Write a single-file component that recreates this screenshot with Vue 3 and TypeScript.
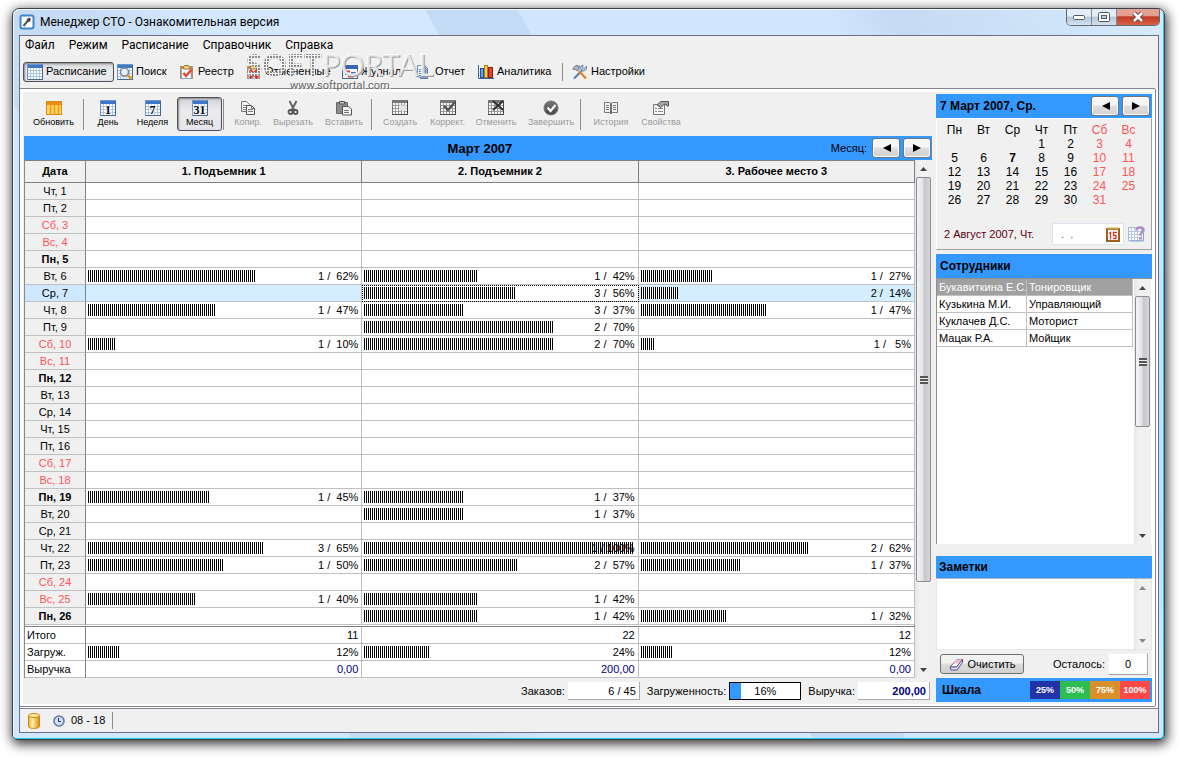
<script setup lang="ts">
interface Cell { count: number; load: number }
interface DayRow { label: string; kind: '' | 'weekend' | 'monday'; cells: (Cell | null)[] }

const menu: string[] = ['Файл', 'Режим', 'Расписание', 'Справочник', 'Справка']

const modes = [
  { label: 'Расписание', icon: 'grid', on: true },
  { label: 'Поиск', icon: 'find' },
  { label: 'Реестр', icon: 'clip' },
  { label: 'Отмененные', icon: 'clipx' },
  { label: 'Журнал', icon: 'journal' },
  { label: 'Отчет', icon: 'report' },
  { label: 'Аналитика', icon: 'chart' },
  { label: '', icon: '' },
  { label: 'Настройки', icon: 'tools' },
]

const actions = [
  { label: 'Обновить', icon: 'refresh' },
  { label: '', icon: '' },
  { label: 'День', icon: 'day', num: '1' },
  { label: 'Неделя', icon: 'day', num: '7' },
  { label: 'Месяц', icon: 'day', num: '31', on: true },
  { label: '', icon: '' },
  { label: 'Копир.', icon: 'copy', off: true },
  { label: 'Вырезать', icon: 'cut', off: true },
  { label: 'Вставить', icon: 'paste', off: true },
  { label: '', icon: '' },
  { label: 'Создать', icon: 'gnew', off: true },
  { label: 'Коррект.', icon: 'gedit', off: true },
  { label: 'Отменить', icon: 'gdel', off: true },
  { label: 'Завершить', icon: 'done', off: true },
  { label: '', icon: '' },
  { label: 'История', icon: 'book', off: true },
  { label: 'Свойства', icon: 'props', off: true },
]

const places: string[] = ['1. Подъемник 1', '2. Подъемник 2', '3. Рабочее место 3']
const weekdays: string[] = ['Пн', 'Вт', 'Ср', 'Чт', 'Пт', 'Сб', 'Вс']

const orders: Record<number, (([number, number]) | null)[]> = {
  6: [[1, 62], [1, 42], [1, 27]],
  7: [null, [3, 56], [2, 14]],
  8: [[1, 47], [3, 37], [1, 47]],
  9: [null, [2, 70], null],
  10: [[1, 10], [2, 70], [1, 5]],
  19: [[1, 45], [1, 37], null],
  20: [null, [1, 37], null],
  22: [[3, 65], [1, 100], [2, 62]],
  23: [[1, 50], [2, 57], [1, 37]],
  25: [[1, 40], [1, 42], null],
  26: [null, [1, 42], [1, 32]],
}

const days: DayRow[] = Array.from({ length: 26 }, (_, i) => {
  const day = i + 1
  const wd = (i + 3) % 7
  const found = orders[day] ?? [null, null, null]
  return {
    label: `${weekdays[wd]}, ${day}`,
    kind: wd > 4 ? 'weekend' : wd === 0 ? 'monday' : '',
    cells: found.map((c) => (c ? { count: c[0], load: c[1] } : null)),
  }
})

const cellText = (c: Cell): string => `${c.count} / ${`${c.load}%`.padStart(4, ' ')}`

const weeks: (number | null)[][] = [
  [null, null, null, 1, 2, 3, 4],
  [5, 6, 7, 8, 9, 10, 11],
  [12, 13, 14, 15, 16, 17, 18],
  [19, 20, 21, 22, 23, 24, 25],
  [26, 27, 28, 29, 30, 31, null],
]

const staff: [string, string][] = [
  ['Букавиткина Е.С.', 'Тонировщик'],
  ['Кузькина М.И.', 'Управляющий'],
  ['Куклачев Д.С.', 'Моторист'],
  ['Мацак Р.А.', 'Мойщик'],
]

const loads: number[] = [12, 24, 12]
</script>

<template>
  <div class="desktop">
    <svg class="defs" aria-hidden="true">
      <linearGradient id="gold" x1="0" x2="1"><stop offset="0" stop-color="#f0a818" /><stop offset=".35" stop-color="#fff2b0" /><stop offset="1" stop-color="#dc8c08" /></linearGradient>
      <linearGradient id="ball" x1="0" y1="0" x2="0" y2="1"><stop offset="0" stop-color="#777" /><stop offset="1" stop-color="#444" /></linearGradient>
      <symbol id="i-grid" viewBox="0 0 16 16">
        <rect x=".5" y=".5" width="15" height="15" fill="#fff" stroke="#6f93c8" />
        <rect x="1" y="1" width="14" height="3" fill="#3c78c8" />
        <path d="M1 6.500h14M1 9.500h14M1 12.500h14M3.500 4v11M6.500 4v11M9.500 4v11M12.500 4v11" stroke="#a9c4e8" />
        <path d="M15.500 1v14.500H1" fill="none" stroke="#45658f" />
      </symbol>
      <symbol id="i-find" viewBox="0 0 16 16">
        <use href="#i-grid" />
        <circle cx="7.500" cy="8" r="4" fill="#e4f1fb" stroke="#7d8794" stroke-width="1.500" />
        <path d="M10.500 11l4 4" stroke="#d99a2b" stroke-width="2.500" />
      </symbol>
      <symbol id="i-clip" viewBox="0 0 16 16">
        <path d="M1.500 2.500h12v12h-12z" fill="#c9853a" stroke="#b98a5a" />
        <path d="M2.500 4.500h9l1 10h-10z" fill="#f4f7fc" stroke="#8fa6c8" />
        <path d="M4.500 3.500l1-2h4l1 2v1.500h-6z" fill="#f0d48a" stroke="#9f7a25" />
        <path d="M4.500 9l2.500 3 5.500-6.500" fill="none" stroke="#e04a32" stroke-width="2.400" />
      </symbol>
      <symbol id="i-clipx" viewBox="0 0 16 16">
        <path d="M1.500 2.500h12v12h-12z" fill="#c9853a" stroke="#b98a5a" />
        <path d="M2.500 4.500h10v10h-10z" fill="#f4f7fc" stroke="#8fa6c8" />
        <path d="M4.500 3.500l1-2h4l1 2v1.500h-6z" fill="#f0d48a" stroke="#9f7a25" />
        <path d="M4 6l7.500 8M11.500 6L4 14" stroke="#d92a1c" stroke-width="2.800" />
      </symbol>
      <symbol id="i-journal" viewBox="0 0 16 16">
        <rect x=".5" y="1.500" width="15" height="13" fill="#f3f7fd" stroke="#4a6694" />
        <path d="M1 3.500h14" stroke="#3465b5" stroke-width="3" />
        <path d="M3 7.500h5M6 12.500h6" stroke="#e03c2c" stroke-width="2" />
        <path d="M3 10h4M9 9h5" stroke="#4073c4" stroke-width="2" />
      </symbol>
      <symbol id="i-report" viewBox="0 0 16 16">
        <path d="M4.500 1.500h4l3 3v10h-7z" fill="#9fb6d4" stroke="#56739c" />
        <path d="M1.500 1.500h5l3 3v8.500h-8z" fill="#eef5fd" stroke="#6d8cb5" />
        <path d="M3 5.500h4M3 7.500h5M3 9.500h5M3 11.500h5" stroke="#4f7fc0" />
      </symbol>
      <symbol id="i-chart" viewBox="0 0 16 16">
        <path d="M.5 1v13.500H16" fill="none" stroke="#3b5f9c" />
        <rect x="2.500" y="4.500" width="3" height="9" fill="#6ea2e8" stroke="#234f96" />
        <rect x="6.500" y="1.500" width="3" height="12" fill="#fbd24b" stroke="#b27c12" />
        <rect x="10.500" y="3.500" width="4" height="10" fill="#e2442f" stroke="#8d1f12" />
      </symbol>
      <symbol id="i-tools" viewBox="0 0 16 16">
        <path d="M2 14.500L11 5.500" stroke="#5d7fae" stroke-width="2.200" />
        <path d="M14.500 2l-2 2.500-2-1 .5-2.500c-3 .5-3 3.500-1.500 5s4.500 1 5-1.500z" fill="#b5c9e4" stroke="#54729f" stroke-width=".8" />
        <path d="M7 7l7 7.500" stroke="#d98b26" stroke-width="2.400" />
        <path d="M.8 4.500L4 1.200l4 1.300-1.500.8.8 2L5.200 7 3.500 5l-1.500 1z" fill="#aab4c2" stroke="#5b6675" stroke-width=".8" />
      </symbol>
      <symbol id="i-refresh" viewBox="0 0 16 16">
        <rect x=".5" y="1.500" width="15" height="13" fill="#ffd35c" stroke="#d78a14" />
        <rect x="1" y="2" width="14" height="3" fill="#ee8d10" />
        <path d="M4.500 5v9M8.500 5v9M12.500 5v9" stroke="#ee9c20" stroke-width="1.500" />
      </symbol>
      <symbol id="i-copy" viewBox="0 0 16 16">
        <path d="M1.500 1.500h5l3 3v7h-8z" fill="#f4f4f4" stroke="#777" />
        <path d="M3 5.500h4M3 7.500h4M3 9.500h4" stroke="#888" />
        <path d="M6.500 5.500h5l3 3v6h-8z" fill="#f4f4f4" stroke="#555" />
        <path d="M8 9.500h5M8 11.500h5M11.500 5.500v3h3" fill="none" stroke="#777" />
      </symbol>
      <symbol id="i-cut" viewBox="0 0 16 16">
        <path d="M4.500 1l5 9.500M11.500 1l-5 9.500" stroke="#666" stroke-width="2" />
        <circle cx="5.500" cy="12" r="2" fill="none" stroke="#555" stroke-width="1.800" />
        <circle cx="10.500" cy="12" r="2" fill="none" stroke="#555" stroke-width="1.800" />
      </symbol>
      <symbol id="i-paste" viewBox="0 0 16 16">
        <path d="M.5 2.500h11v11H.5z" fill="#8c8c8c" stroke="#666" />
        <path d="M3.500 1.500h5v2.500h-5z" fill="#ccc" stroke="#555" />
        <path d="M6.500 6.500h6l3 2.500v6h-9z" fill="#f6f6f6" stroke="#555" />
        <path d="M8 10.500h5M8 12.500h5" stroke="#777" />
      </symbol>
      <symbol id="i-ggrid" viewBox="0 0 16 16">
        <rect x=".5" y=".5" width="15" height="14" fill="#fafafa" stroke="#777" />
        <rect x="1" y="1" width="14" height="2" fill="#777" />
        <path d="M1 5.500h14M1 8.500h14M1 11.500h14M3.500 3v12M6.500 3v12M9.500 3v12M12.500 3v12" stroke="#999" />
        <path d="M15.500 1v13.500H0" fill="none" stroke="#444" />
      </symbol>
      <symbol id="i-gnew" viewBox="0 0 16 16">
        <use href="#i-ggrid" />
        <path d="M11 4v8M7 8h8M8 5l6 6M14 5l-6 6" stroke="#e4e4e4" stroke-width="1.500" />
      </symbol>
      <symbol id="i-gedit" viewBox="0 0 16 16">
        <use href="#i-ggrid" />
        <path d="M4 6l4 4 7-8" fill="none" stroke="#555" stroke-width="2.500" />
      </symbol>
      <symbol id="i-gdel" viewBox="0 0 16 16">
        <use href="#i-ggrid" />
        <path d="M5 1l10 9M15 1L5 10" stroke="#333" stroke-width="2" />
      </symbol>
      <symbol id="i-done" viewBox="0 0 16 16">
        <circle cx="8" cy="8" r="7" fill="url(#ball)" stroke="#777" />
        <path d="M4.500 7.500L7.500 11l5-6" fill="none" stroke="#fff" stroke-width="2.200" />
      </symbol>
      <symbol id="i-book" viewBox="0 0 16 16">
        <path d="M1.500 2.500h5l1.500 1 1.500-1h5v10h-5l-1.500 1-1.500-1h-5z" fill="#f2f2f2" stroke="#777" />
        <path d="M8 3.500v10" stroke="#444" stroke-width="1.500" />
        <path d="M3 5.500h3M3 7.500h3M3 9.500h3M10 5.500h3M10 7.500h3M10 9.500h3" stroke="#777" />
      </symbol>
      <symbol id="i-props" viewBox="0 0 16 16">
        <path d="M.5 4.500h11v10H.5z" fill="#f6f6f6" stroke="#777" />
        <path d="M2 8.500h2M5 8.500h5M2 11.500h2M5 11.500h5" stroke="#888" />
        <path d="M4 5l4-3.500h7.500V6H14l-1-2-2 .5L8 7.500z" fill="#a5a5a5" stroke="#555" />
      </symbol>
      <symbol id="i-left" viewBox="0 0 9 8"><path d="M9 0v8L1 4z" fill="currentColor" /></symbol>
      <symbol id="i-right" viewBox="0 0 9 8"><path d="M0 0v8l8-4z" fill="currentColor" /></symbol>
      <symbol id="i-up" viewBox="0 0 8 4"><path d="M0 4h7L3.500 0z" fill="currentColor" /></symbol>
      <symbol id="i-down" viewBox="0 0 8 4"><path d="M0 0h7L3.500 4z" fill="currentColor" /></symbol>
    </svg>

    <div class="window">
      <header class="title">
        <svg class="logo" width="16" height="16" viewBox="0 0 16 16">
          <rect x="1.500" y="1.500" width="13" height="13" rx="2" fill="#fff" stroke="#3f86cc" stroke-width="2" />
          <path d="M4.500 12L9 6.500" stroke="#555" stroke-width="2" />
          <path d="M7.500 5.500L10 3.500l2 1.500-1.500 3-2-.5z" fill="#444" />
        </svg>
        <h1>Менеджер СТО - Ознакомительная версия</h1>
        <div class="sys">
          <button type="button" aria-label="Свернуть"><svg width="14" height="8" viewBox="0 0 14 8"><rect x="1.500" y="2.500" width="11" height="4" rx="1" fill="#fff" stroke="#555b66" /></svg></button>
          <button type="button" aria-label="Развернуть"><svg width="14" height="12" viewBox="0 0 14 12"><rect x="1.500" y="1.500" width="11" height="9" rx="1" fill="#fff" stroke="#555b66" /><rect x="4.500" y="4.500" width="5" height="3" fill="#b8cce2" stroke="#555b66" /></svg></button>
          <button type="button" class="close" aria-label="Закрыть"><svg width="14" height="12" viewBox="0 0 14 12"><path d="M3 2l8 8M11 2l-8 8" stroke="#5a3a3a" stroke-width="4.500" /><path d="M3 2l8 8M11 2l-8 8" stroke="#fff" stroke-width="2.600" /></svg></button>
        </div>
      </header>

      <div class="client">
        <nav class="menu"><a v-for="m in menu" :key="m" href="#">{{ m }}</a></nav>

        <div class="modes">
          <template v-for="(m, i) in modes" :key="i">
            <button v-if="m.label" type="button" :class="{ on: m.on }">
              <svg width="16" height="16"><use :href="'#i-' + m.icon" /></svg>{{ m.label }}
            </button>
            <i v-else class="sep"></i>
          </template>
          <div class="mark"><span class="logo-text"><span class="dots">SOFT</span>PORTAL</span><span class="site">www.softportal.com</span></div>
        </div>

        <div class="panel">
          <main class="left">
            <div class="actions">
              <template v-for="(a, i) in actions" :key="i">
                <button v-if="a.label" type="button" :class="{ on: a.on }" :disabled="a.off">
                  <span v-if="a.num" class="num"><svg width="16" height="16"><use href="#i-grid" /></svg><b>{{ a.num }}</b></span>
                  <svg v-else width="16" height="16"><use :href="'#i-' + a.icon" /></svg>
                  {{ a.label }}
                </button>
                <i v-else class="sep"></i>
              </template>
            </div>

            <div class="bar month">
              <h2>Март 2007</h2>
              <span class="cap">Месяц:</span>
              <button type="button" class="arrow" aria-label="Предыдущий месяц"><svg width="9" height="8"><use href="#i-left" /></svg></button>
              <button type="button" class="arrow" aria-label="Следующий месяц"><svg width="9" height="8"><use href="#i-right" /></svg></button>
            </div>

            <div class="sheet">
              <table class="plan">
                <colgroup><col class="c-date" /><col /><col /><col /></colgroup>
                <thead>
                  <tr><th>Дата</th><th v-for="p in places" :key="p">{{ p }}</th></tr>
                </thead>
                <tbody>
                  <tr v-for="(d, r) in days" :key="d.label" :class="{ today: r === 6 }">
                    <th :class="d.kind">{{ d.label }}</th>
                    <td v-for="(c, k) in d.cells" :key="k" :class="{ focus: r === 6 && k === 1 }">
                      <div v-if="c" class="load"><span class="track"><i class="fill" :style="{ width: c.load + '%' }"></i></span><span class="val">{{ cellText(c) }}</span></div>
                    </td>
                  </tr>
                </tbody>
                <tfoot>
                  <tr class="rule"><td colspan="4"></td></tr>
                  <tr><th>Итого</th><td>11</td><td>22</td><td>12</td></tr>
                  <tr>
                    <th>Загруж.</th>
                    <td v-for="(l, k) in loads" :key="k"><div class="load"><span class="track"><i class="fill" :style="{ width: l + '%' }"></i></span><span class="val">{{ l }}%</span></div></td>
                  </tr>
                  <tr class="money"><th>Выручка</th><td>0,00</td><td>200,00</td><td>0,00</td></tr>
                </tfoot>
              </table>
              <div class="scroll">
                <svg class="tip" width="8" height="4"><use href="#i-up" /></svg>
                <div class="thumb big"><i></i></div>
                <div class="rest"></div>
                <svg class="tip" width="8" height="4"><use href="#i-down" /></svg>
              </div>
            </div>

            <div class="sums">
              <label for="s1">Заказов:</label><input id="s1" value="6 / 45" readonly />
              <label for="s2">Загруженность:</label>
              <div id="s2" class="gauge"><i></i><span>16%</span></div>
              <label for="s3">Выручка:</label><input id="s3" class="total" value="200,00" readonly />
            </div>
          </main>

          <aside class="side">
            <div class="bar">
              <h2>7 Март 2007, Ср.</h2>
              <button type="button" class="arrow" aria-label="Назад"><svg width="9" height="8"><use href="#i-left" /></svg></button>
              <button type="button" class="arrow" aria-label="Вперед"><svg width="9" height="8"><use href="#i-right" /></svg></button>
            </div>
            <section class="calbox">
              <table class="cal">
                <thead><tr><th v-for="w in weekdays" :key="w">{{ w }}</th></tr></thead>
                <tbody>
                  <tr v-for="(w, i) in weeks" :key="i"><td v-for="(d, k) in w" :key="k" :class="{ cur: d === 7 }">{{ d }}</td></tr>
                </tbody>
              </table>
              <div class="date">
                <label for="dt">2 Август 2007, Чт.</label>
                <div class="field">
                  <input id="dt" value=".  ." />
                  <button type="button" aria-label="Календарь">
                    <svg width="14" height="15" viewBox="0 0 14 15"><rect x="1" y="2" width="12" height="12" fill="#fff" stroke="#9a5f22" stroke-width="2" /><path d="M1 1.500h12" stroke="#c8a04a" stroke-width="2" /><path d="M3 6.500l1.500-1v7M11 5.500H7.500v3h2.500v3H7" fill="none" stroke="#e23a2a" stroke-width="1.300" /></svg>
                  </button>
                </div>
                <button type="button" class="ask" aria-label="Найти дату">
                  <svg width="17" height="16" viewBox="0 0 17 16"><rect x=".5" y="1.500" width="13" height="13" fill="#fff" stroke="#a9bbd6" /><path d="M1 5.500h12M1 8.500h12M1 11.500h12M3.500 2v12M6.500 2v12M9.500 2v12" stroke="#b7c8e0" /><path d="M15.500 7v8H2" fill="none" stroke="#8fa3c2" /><path d="M8.500 4.500c0-4 7-4 7 0 0 2.500-3.500 2-3.500 5" fill="none" stroke="#b28ccc" stroke-width="2.500" /><path d="M11 11h2.500v2.500H11z" fill="#b28ccc" /></svg>
                </button>
              </div>
            </section>

            <div class="bar"><h2>Сотрудники</h2></div>
            <div class="list">
              <table class="staff">
                <colgroup><col class="c-name" /><col /></colgroup>
                <tbody><tr v-for="(s, i) in staff" :key="i" :class="{ sel: i === 0 }"><td>{{ s[0] }}</td><td>{{ s[1] }}</td></tr></tbody>
              </table>
              <div class="scroll">
                <svg class="tip" width="8" height="4"><use href="#i-up" /></svg>
                <div class="thumb mid"><i></i></div>
                <div class="rest mid"></div>
                <svg class="tip" width="8" height="4"><use href="#i-down" /></svg>
              </div>
            </div>

            <div class="bar notes-bar"><h2><label for="notes">Заметки</label></h2></div>
            <div class="notes">
              <textarea id="notes"></textarea>
              <div class="scroll faded">
                <svg class="tip" width="8" height="4"><use href="#i-up" /></svg>
                <div class="rest"></div>
                <svg class="tip" width="8" height="4"><use href="#i-down" /></svg>
              </div>
            </div>
            <div class="clear">
              <button type="button">
                <svg width="15" height="13" viewBox="0 0 15 13"><path d="M1 9l7-7.500h5.500L7.500 9z" fill="#fff" stroke="#8a5a78" /><path d="M4.500 5.500L8 1.500h5.500L10.500 5.500z" fill="#f3bfd4" /><path d="M1 9h6.500l6-7.500v3L8 12H2z" fill="#dfe3f4" stroke="#54508a" /></svg>Очистить
              </button>
              <label for="rest">Осталось:</label>
              <input id="rest" value="0" readonly />
            </div>
            <div class="bar scale">
              <h2>Шкала</h2>
              <div class="steps"><span class="s25">25%</span><span class="s50">50%</span><span class="s75">75%</span><span class="s100">100%</span></div>
            </div>
          </aside>
        </div>

        <footer class="status">
          <svg width="12" height="16" viewBox="0 0 12 16"><path d="M.5 2.500v11c0 2.500 11 2.500 11 0v-11z" fill="url(#gold)" stroke="#c98a1c" /><ellipse cx="6" cy="2.500" rx="5.500" ry="2" fill="#ffe9a0" stroke="#c98a1c" /></svg>
          <svg width="12" height="12" viewBox="0 0 12 12"><circle cx="6" cy="6" r="5" fill="#cfe0f8" stroke="#5b76a6" stroke-width="1.500" /><path d="M5.500 3v3.500H8" fill="none" stroke="#234" /></svg>
          <span>08 - 18</span>
        </footer>
      </div>
    </div>
  </div>
</template>

<style>
body { background: #fff; }
</style>

<style scoped>
* { box-sizing: border-box; }
.desktop {
  min-height: 100vh; padding: 8px 13px 18px 12px; display: flex; flex-direction: column;
  font: 11px/17px "Liberation Sans", Arial, sans-serif; color: #000; overflow: hidden;
}
.defs { position: absolute; width: 0; height: 0; }
button, input, textarea { font: inherit; color: inherit; margin: 0; padding: 0; }
svg { flex: none; }
h1, h2 { margin: 0; font-weight: normal; }
table { border-spacing: 0; table-layout: fixed; }
td, th { padding: 0; font-weight: normal; }

.window {
  flex: 1; display: flex; flex-direction: column; padding: 0 5px 6px 6px;
  border: 1px solid #3b444e; border-radius: 7px 7px 5px 5px;
  background: linear-gradient(62deg, #cfe6ff 0 22%, #c6dcf4 22% 30%, #d3e8ff 36% 52%, #c3dbf5 52% 58%, #d0e6ff 58% 78%, #c4dbf3 82%, #d8eafd);
  box-shadow: inset 1px 1px 0 #f2faff, inset -1px -1px 0 #24c8f4, 1px 3px 12px 1px rgba(0, 0, 0, .8);
}
.title { display: flex; align-items: flex-start; height: 26px; }
.logo { margin: 5px 5px 0 0; }
.title h1 { flex: 1; font: 12px/26px Roboto, "Open Sans", sans-serif; }
.sys { display: flex; margin-right: -1px; border: 1px solid #5f6c7a; border-top: 0; border-radius: 0 0 5px 5px; overflow: hidden; }
.sys button {
  width: 25px; height: 16px; border: 0; border-right: 1px solid #7d8a98; display: grid; place-items: center;
  background: linear-gradient(#e4edf6 0 45%, #b3c5d8 50%, #d3e2f0);
}
.sys .close { width: 42px; border-right: 0; background: linear-gradient(#e3a093 0 40%, #c03a22 50%, #d86248); }

.client { flex: 1; display: flex; flex-direction: column; border: 1px solid #6a7080; background: #fff; }
.menu { display: flex; gap: 14px; height: 19px; padding-left: 5px; background: #f0f0f0; font: 12px/18px Roboto, "Open Sans", sans-serif; }
.menu a { color: #000; text-decoration: none; }

.modes {
  position: relative; display: grid; grid-template-columns: 92px 62px 67px 96px 74px 62px 86px 8px 90px;
  align-items: center; height: 33px; padding-left: 3px; background: #f0f0f0;
}
.modes button { display: flex; align-items: center; gap: 3px; height: 20px; padding: 0 2px; border: 0; background: none; white-space: nowrap; }
.modes .on, .actions .on { border: 1px solid #50505a; border-radius: 3px; background: linear-gradient(#d4d4d8, #ececee 40%, #e6e6ea); box-shadow: inset 1px 1px 2px #888; }
.modes .on { margin-right: 1px; padding-left: 3px; }
.sep { width: 1px; height: 18px; background: #8c8c8c; }
.mark { position: absolute; left: 226px; top: -9px; pointer-events: none; font-family: Lato, "Open Sans", sans-serif; }
.logo-text { display: block; font-size: 30px; line-height: 36px; color: rgba(255, 255, 255, .75); text-shadow: 1px 1px 0 #9a9a9a; }
.dots {
  color: transparent; text-shadow: none; background-clip: text; font-weight: 900;
  background-image: repeating-linear-gradient(#f4f4f4 0 1px, transparent 1px 3px), repeating-linear-gradient(90deg, #8a8a8a 0 2px, #f4f4f4 2px 3px);
}
.site { display: block; margin: -3px 0 0 44px; font: 11px/13px Roboto, "Open Sans", sans-serif; color: #666; text-shadow: 1px 1px 0 #fff; }

.panel {
  flex: 1; display: flex; gap: 4px; margin-right: 3px; padding: 0; background: #f0f0f0;
  border: solid #fff; border-width: 3px 3px 2px 3px; box-shadow: 0 -1px 0 #85858f, 1px 0 0 #85858f, 0 1px 0 #85858f;
  margin-top: 1px;
}
.left { flex: 1; min-width: 0; padding-left: 1px; display: flex; flex-direction: column; }
.actions {
  display: grid; height: 44px; align-items: center; justify-content: start; font-size: 9px; line-height: 11px;
  grid-template-columns: 59px 4px 42px 47px 47px 4px 42px 48px 54px 4px 50px 45px 52px 58px 4px 54px 46px;
}
.actions button { display: flex; flex-direction: column; align-items: center; justify-content: flex-end; gap: 1px; height: 34px; padding: 0 0 3px; border: 0; background: none; white-space: nowrap; }
.actions .on { margin: 0 1px; border: 1px solid #50505a; padding-bottom: 2px; }
.actions button:disabled { color: #9a9a9a; }
.actions .sep { height: 31px; }
.num { display: grid; grid-template-rows: 16px; place-items: center; height: 16px; }
.num > * { grid-area: 1 / 1; }
.num b { font: bold 12px/16px "Liberation Serif", serif; padding-top: 3px; text-shadow: 1px 0 0 #fff, -1px 0 0 #fff, 0 1px 0 #fff, 0 -1px 0 #fff; }

.bar { display: flex; align-items: center; gap: 3px; height: 24px; flex: none; padding: 0 2px 0 4px; background: #3399ff; }
.bar h2 { flex: 1; font-size: 12px; font-weight: bold; }
.month { padding-right: 1px; padding-left: 108px; }
.month h2 { font-size: 13px; text-align: center; }
.cap { margin-right: 2px; }
.arrow {
  width: 28px; height: 20px; display: grid; place-items: center; border: 1px solid #70757c; border-radius: 3px;
  background: linear-gradient(#f6f6f6 45%, #dedede 50%, #d2d2d2); box-shadow: inset 0 0 0 1px #fcfcfc;
}

.sheet { display: flex; }
.plan { flex: 1; width: 0; border-left: 1px solid #8a8a8a; background: #fff; }
.c-date { width: 61px; }
.plan th, .plan td { height: 17px; line-height: 16px; border: 0 solid #c0c0c0; border-width: 0 1px 1px 0; white-space: pre; }
.plan td { text-align: right; padding-right: 3px; }
.plan tr > :first-child { border-right-color: #808080; }
.plan thead th { height: 23px; line-height: 21px; font-weight: bold; background: #f0f0f0; border: 1px solid #808080; border-left: 0; }
.plan tbody th { text-align: center; background: #f0f0f0; }
.plan tbody .weekend { color: #ff5555; }
.plan tbody .monday { font-weight: bold; }
.plan .today th { background: #d0e8ff; }
.plan .today td { background: #d5eeff; }
.plan .today .focus { background: #fff; outline: 1px dotted #000; outline-offset: -1px; }
.plan .rule td { height: 2px; line-height: 0; padding: 0; border-color: #808080; }
.plan tfoot th { text-align: left; padding-left: 2px; }
.money td { color: #000080; }
.load { display: grid; height: 16px; }
.load > * { grid-area: 1 / 1; }
.track { margin: 2px 1px 2px 2px; }
.fill { display: block; height: 12px; background: repeating-linear-gradient(90deg, #000 0 1px, #fff 1px 2px); }

.scroll { display: flex; flex-direction: column; align-items: center; width: 17px; flex: none; background: linear-gradient(90deg, #e6e6e6, #f2f2f2 30%, #f0f0f0); color: #444; }
.tip { margin: 7px 0 6px; }
.thumb { width: 15px; display: grid; place-items: center; border: 1px solid #8c8c92; border-radius: 2px; background: linear-gradient(90deg, #f4f4f4, #e4e4e6 45%, #c6c8cc 55%, #d6d6da); }
.thumb i { width: 8px; height: 8px; background: repeating-linear-gradient(#555 0 2px, #eee 2px 3px); }
.thumb.big { flex: 404; }
.rest { flex: 79; }
.thumb.mid { flex: 130; }
.rest.mid { flex: 100; }
.faded { color: #8a8a8a; }

.sums { flex: 1; display: flex; align-items: center; justify-content: flex-end; padding: 0 2px 0 0; }
.sums label { margin: 0 3px 0 7px; }
input { border: 1px solid #f4f4f4; border-right-color: #a8a8a8; border-bottom-color: #a8a8a8; background: #fff; outline: 0; }
.sums input { width: 72px; height: 18px; text-align: right; padding-right: 3px; border-top: 0; border-left: 0; }
.sums .total { font-weight: bold; color: #000080; }
.gauge { display: grid; width: 72px; height: 18px; border: 1px solid #000; background: #fff; text-align: center; line-height: 16px; }
.gauge > * { grid-area: 1 / 1; }
.gauge i { width: 16%; background: #3399ff; }

.side { width: 216px; flex: none; display: flex; flex-direction: column; padding: 2px 0; }
.calbox { height: 132px; flex: none; margin-bottom: 4px; padding: 4px 8px 0 3px; border: 1px solid #fff; border-right-color: #a0a0a0; border-bottom-color: #a0a0a0; }
.cal { width: 100%; font-size: 12px; line-height: 14px; text-align: center; }
.cal th, .cal td { height: 14px; }
.cal th:nth-child(n + 6), .cal td:nth-child(n + 6) { color: #ff5555; }
.cal .cur { font-weight: bold; }
.date { display: flex; align-items: center; margin-top: 16px; padding-left: 4px; }
.date label { flex: 1; color: #600010; white-space: nowrap; }
.field { display: flex; align-items: center; width: 72px; height: 22px; margin-right: 4px; padding-right: 3px; background: #fff; border: 1px solid #dfe3ee; }
.field input { flex: 1; width: 0; border: 0; padding-left: 8px; white-space: pre; color: #555; }
.field button, .ask { display: flex; border: 0; background: none; }
.date .ask { margin-right: -2px; }

.list { flex: 1; display: flex; align-items: stretch; border-left: 1px solid #909090; border-top: 1px solid #909090; background: #fff; padding-right: 1px; }
.staff { flex: 1; width: 0; align-self: flex-start; }
.c-name { width: 90px; }
.staff td { height: 17px; line-height: 16px; padding-left: 2px; border: 0 solid #c0c0c0; border-width: 0 1px 1px 0; white-space: nowrap; overflow: hidden; }
.sel td { background: #a0a0a0; color: #fff; }
.notes-bar { height: 22px; margin-top: 12px; padding-left: 3px; }
.list .scroll { margin-left: 1px; }
.notes { display: flex; height: 72px; flex: none; background: #fff; border: 1px solid #e2e6ee; border-top-color: #b0b4bc; }
.notes textarea { flex: 1; width: 0; border: 0; resize: none; outline: 0; background: #fff; }
.clear { display: flex; align-items: center; height: 28px; flex: none; padding: 0 4px; }
.clear button { display: flex; align-items: center; justify-content: center; gap: 4px; width: 84px; height: 20px; border: 1px solid #707070; border-radius: 3px; background: linear-gradient(#f2f2f2 45%, #dcdcdc 50%, #d0d0d0); white-space: nowrap; }
.clear label { flex: 1; text-align: right; margin-right: 3px; }
.clear input { width: 40px; height: 22px; text-align: center; }
.scale { padding-left: 6px; }
.steps { display: flex; font: bold 9px/18px "Liberation Sans", Arial, sans-serif; color: #fff; text-align: center; }
.steps span { width: 30px; }
.s25 { background: #2233aa; }
.s50 { background: #2dbd50; }
.s75 { background: #d98f2c; }
.s100 { background: #ff4848; }

.status { display: flex; align-items: center; height: 24px; flex: none; margin-top: 2px; padding-left: 8px; border-top: 1px solid #85858f; background: #f0f0f0; }
.status svg + svg { margin: 0 6px 0 13px; }
.status span { padding-right: 7px; border-right: 1px solid #8c8c8c; }
</style>
